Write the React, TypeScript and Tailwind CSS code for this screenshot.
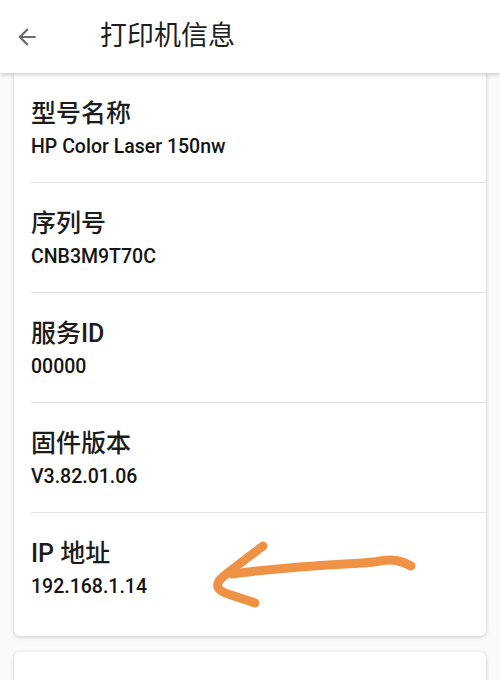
import React from 'react';

const rows = [
  { label: '型号名称', value: 'HP Color Laser 150nw' },
  { label: '序列号', value: 'CNB3M9T70C' },
  { label: '服务ID', value: '00000' },
  { label: '固件版本', value: 'V3.82.01.06' },
  { label: 'IP 地址', value: '192.168.1.14' },
];

const font = { fontFamily: 'Roboto, "Noto Sans CJK SC", sans-serif' };

export default function App() {
  return (
    <div className="relative w-[500px] h-[680px] overflow-hidden bg-[#fafafa]" style={font}>
      {/* top bar */}
      <div className="relative z-10 h-[73px] bg-white flex items-center shadow-[0_2px_4px_rgba(0,0,0,0.18)]">
        <svg className="ml-[14px] w-[26px] h-[26px] text-[#6b6b6b]" viewBox="0 0 24 24" fill="currentColor">
          <path d="M20 11H7.83l5.59-5.59L12 4l-8 8 8 8 1.41-1.41L7.83 13H20v-2z" />
        </svg>
        <div className="ml-[60px] text-[27px] leading-none text-[#1e1e1e]">打印机信息</div>
      </div>

      {/* info card */}
      <div className="mx-[14px] bg-white rounded-b-md shadow-[0_1px_4px_rgba(0,0,0,0.2)] pb-[14px]">
        {rows.map((r, i) => (
          <div key={i} className="pl-[17px]">
            <div className={'pt-[25px] pb-[23px] ' + (i < rows.length - 1 ? 'border-b border-[#e3e3e3]' : '')}>
              <div className="text-[25px] leading-[32px] font-medium text-[#1c1c1c]">{r.label}</div>
              <div className="mt-[5px] text-[19.5px] leading-[24px] font-medium text-[#141414]">{r.value}</div>
            </div>
          </div>
        ))}
      </div>

      {/* next card, cut off */}
      <div className="mx-[14px] mt-[16px] h-[60px] bg-white rounded-md shadow-[0_1px_4px_rgba(0,0,0,0.2)]" />

      {/* hand-drawn annotation arrow */}
      <svg className="absolute left-0 top-0 w-[500px] h-[680px] pointer-events-none" viewBox="0 0 500 680" fill="none">
        <path
          d="M411 566 C 400 560, 392 559, 380 561 C 370 563, 362 563, 345 564 C 310 566, 270 569, 232 574"
          stroke="#ef9245" strokeWidth="9" strokeLinecap="round" strokeLinejoin="round"
        />
        <path
          d="M263 546 C 250 556, 236 566, 224 576 C 214 584, 216 590, 228 594 L 255 603"
          stroke="#ef9245" strokeWidth="9" strokeLinecap="round" strokeLinejoin="round"
        />
      </svg>
    </div>
  );
}
